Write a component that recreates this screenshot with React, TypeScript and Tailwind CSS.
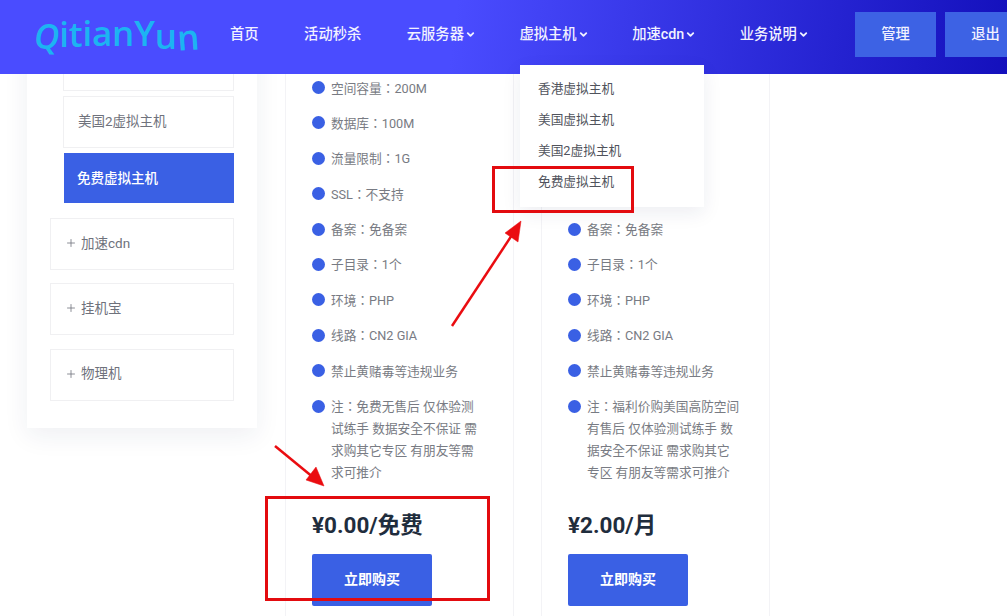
import React from 'react';
import { ChevronDown, Plus } from 'lucide-react';

const freePlan = [
  '空间容量：200M',
  '数据库：100M',
  '流量限制：1G',
  'SSL：不支持',
  '备案：免备案',
  '子目录：1个',
  '环境：PHP',
  '线路：CN2 GIA',
  '禁止黄赌毒等违规业务',
];

const plans = [
  {
    note: ['注：免费无售后 仅体验测', '试练手 数据安全不保证 需', '求购其它专区 有朋友等需', '求可推介'],
    price: '¥0.00/免费',
  },
  {
    note: ['注：福利价购美国高防空间', '有售后 仅体验测试练手 数', '据安全不保证 需求购其它', '专区 有朋友等需求可推介'],
    price: '¥2.00/月',
  },
];

const nav = [
  { label: '首页' },
  { label: '活动秒杀' },
  { label: '云服务器', menu: true },
  { label: '虚拟主机', menu: true },
  { label: '加速cdn', menu: true },
  { label: '业务说明', menu: true },
];

const logo = [
  { c: 'Q', cls: 'italic translate-y-[1px]' },
  { c: 'i', cls: '-translate-y-[1px]' },
  { c: 't', cls: '-translate-y-[1px]' },
  { c: 'i', cls: '-translate-y-[2px]' },
  { c: 'a', cls: '-translate-y-[2px]' },
  { c: 'n', cls: '-translate-y-[2px]' },
  { c: 'Y', cls: '-translate-y-[2px]' },
  { c: 'u', cls: 'translate-y-[1px]' },
  { c: 'n', cls: 'translate-y-[2px] rotate-[-4deg]' },
];

function Header() {
  return (
    <header className="relative z-10 flex h-[74px] items-start bg-[linear-gradient(97deg,#4a4cff_45%,#1410bc_100%)]">
      <div className="mt-[13px] ml-[34px] flex w-[196px] text-[35px] leading-[44px] tracking-[-0.2px] font-semibold text-[#1cb4f2] font-['Open_Sans',sans-serif]">
        {logo.map((l, i) => (
          <span key={i} className={`inline-block ${l.cls}`}>{l.c}</span>
        ))}
      </div>
      <nav className="flex h-[69px] items-center gap-[43.5px] text-[14.3px] font-medium text-[#f1f1ff]">
        {nav.map((n) => (
          <span key={n.label} className={`flex items-center gap-[1px] ${n.menu ? '' : 'pr-[2px]'}`}>
            {n.label}
            {n.menu && <ChevronDown size={11} strokeWidth={4} />}
          </span>
        ))}
      </nav>
      <div className="ml-auto -mr-[19px] mt-[12px] flex gap-[9px] text-[14.3px] font-medium text-[#f1f1ff]">
        <button className="h-[45px] w-[81px] bg-[#3d62e4]">管理</button>
        <button className="h-[45px] w-[81px] bg-[#3d62e4]">退出</button>
      </div>
    </header>
  );
}

function Sidebar() {
  const boxCls = 'h-[52px] border border-[#f0f0f2] bg-white flex items-center';
  return (
    <aside className="flex h-[408px] w-[230px] shrink-0 flex-col bg-white pt-[19px] pl-[23px] pr-[23px] shadow-[0_8px_24px_rgba(30,40,90,0.07)] text-[13.5px] text-[#6f727c]">
      <div className="ml-[13px] flex flex-col gap-[5px]">
        <div className={boxCls} />
        <div className={`${boxCls} pl-[14px] pb-[2px]`}>美国2虚拟主机</div>
        <div className="ml-px flex h-[50px] items-center bg-[#3a60e4] pl-[13px] text-white font-medium">免费虚拟主机</div>
      </div>
      <div className="mt-[15px] flex flex-col gap-[13.3px]">
        {['加速cdn', '挂机宝', '物理机'].map((t) => (
          <div key={t} className={`${boxCls} gap-[4px] pl-[14px] pb-[2px]`}>
            <Plus size={12} strokeWidth={1.6} />
            {t}
          </div>
        ))}
      </div>
    </aside>
  );
}

function PlanCard({ note, price }: { note: string[]; price: string }) {
  return (
    <section className="h-[600px] w-[229px] shrink-0 border-x border-[#f3f3f6] pt-[57.5px] pl-[26px]">
      <ul className="flex flex-col gap-[13.4px] text-[12.7px] leading-[22px] text-[#787b83] font-['Roboto','Noto_Sans_CJK_TC',sans-serif]">
        {freePlan.map((item) => (
          <li key={item} className="flex gap-[6px]">
            <span className="mt-[3.5px] size-[13px] shrink-0 rounded-full bg-[#3a60e4]" />
            {item}
          </li>
        ))}
        <li className="flex gap-[6px]">
          <span className="mt-[3.5px] size-[13px] shrink-0 rounded-full bg-[#3a60e4]" />
          <div>
            {note.map((line) => (
              <div key={line}>{line}</div>
            ))}
          </div>
        </li>
      </ul>
      <div className="mt-[24.5px] text-[22.5px] leading-[32px] font-bold text-[#1f2d3d]">{price}</div>
      <button className="mt-[13px] h-[52px] w-[120px] rounded-[2px] bg-[#3a60e4] text-[14px] font-bold text-white">立即购买</button>
    </section>
  );
}

function Dropdown() {
  return (
    <div className="absolute top-[65px] left-[520px] z-20 flex h-[142px] w-[184px] flex-col gap-[9px] bg-white pt-[13px] pl-[18px] text-[12.7px] leading-[22px] text-[#50535c] shadow-[0_6px_18px_rgba(30,40,90,0.08)]">
      <div>香港虚拟主机</div>
      <div>美国虚拟主机</div>
      <div>美国2虚拟主机</div>
      <div>免费虚拟主机</div>
    </div>
  );
}

function Annotations() {
  return (
    <>
      <div className="absolute top-[166px] left-[492px] z-30 h-[47px] w-[142px] border-[3px] border-[#e30b0f]" />
      <div className="absolute top-[496px] left-[265px] z-30 h-[105px] w-[225px] border-[3px] border-[#e30b0f]" />
      <svg className="absolute top-0 left-0 z-30" width="1007" height="616" fill="#ea0c10" stroke="#ea0c10">
        <line x1="452" y1="326" x2="514" y2="232" strokeWidth="2.5" />
        <polygon points="521,221 518,242 505,233" strokeWidth="0.5" />
        <line x1="275" y1="446" x2="314" y2="478" strokeWidth="2.5" />
        <polygon points="324,486 306,480 316,467" strokeWidth="0.5" />
      </svg>
    </>
  );
}

export default function App() {
  return (
    <div className="relative h-[616px] w-[1007px] overflow-hidden bg-white font-['Roboto','Noto_Sans_CJK_SC',sans-serif]">
      <Header />
      <main className="h-[542px] overflow-hidden">
        <div className="-mt-[54px] flex items-start pl-[27px]">
          <Sidebar />
          <div className="ml-[28px] flex gap-[27px]">
            {plans.map((p) => (
              <PlanCard key={p.price} note={p.note} price={p.price} />
            ))}
          </div>
        </div>
      </main>
      <Dropdown />
      <Annotations />
    </div>
  );
}
